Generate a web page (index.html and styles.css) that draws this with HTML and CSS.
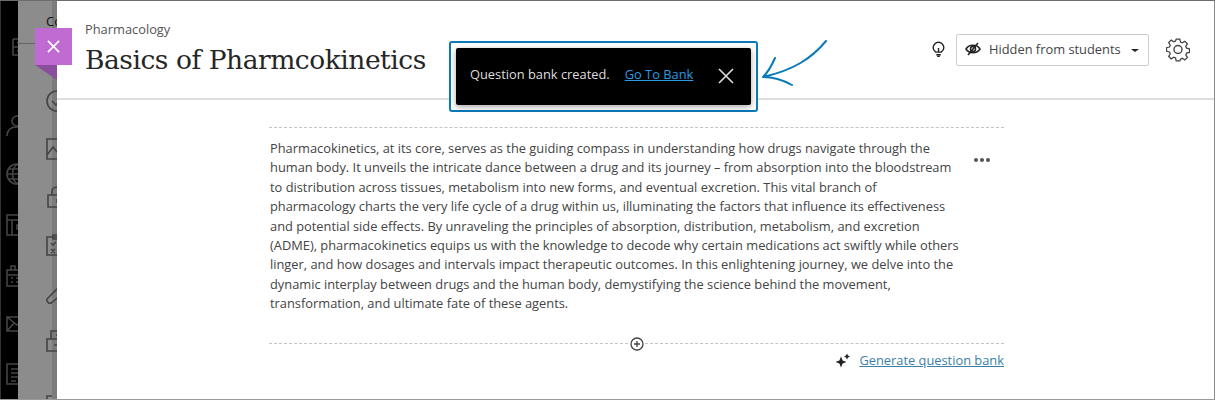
FILE: index.html
```html
<!DOCTYPE html>
<html lang="en">
<head>
  <meta charset="UTF-8">
  <title>Basics of Pharmcokinetics</title>
  <link rel="stylesheet" href="styles.css">
</head>
<body>
  <div class="page">
    <div class="rail">
      <svg class="rail-logo" viewBox="0 0 12 18"><path d="M1 1h11M1 1v16h11M1 9h11M5 5h7M5 13h7"/></svg>
      <svg class="rail-person" viewBox="0 0 22 22"><circle cx="11" cy="6" r="5"/><path d="M1 21c0-6 4-9 10-9s10 3 10 9"/></svg>
      <svg viewBox="0 0 22 22"><circle cx="11" cy="11" r="10"/><path d="M1 11h20M2 6h18M2 16h18M11 1c-6 6-6 14 0 20M11 1c6 6 6 14 0 20"/></svg>
      <svg viewBox="0 0 22 22"><path d="M1 1h20v20H1zM1 6h20M6 6v15M11 11h8v4h-8z"/></svg>
      <svg viewBox="0 0 22 22"><path d="M1 5h20v16H1zM1 10h20M5 1h4v4H5zM14 1h4v4h-4zM5 13h2M10 13h2M15 13h2M5 17h2M10 17h2M15 17h2"/></svg>
      <svg class="rail-mail" viewBox="0 0 22 16"><path d="M1 1h20v14H1zM1 1l10 8 10-8M1 15l7-8M21 15l-7-8"/></svg>
      <svg viewBox="0 0 22 22"><path d="M1 1h20v20H1zM5 6h12M5 10h12M5 14h12M5 18h5"/></svg>
    </div>
    <div class="nav">
      <div class="nav-title">Course</div>
      <svg viewBox="0 0 22 22"><circle cx="11" cy="11" r="10"/><path d="M6 11l4 4 6-7"/></svg>
      <svg viewBox="0 0 22 22"><path d="M1 1h20v20H1zM1 17l6-8 5 6 3-3 6 6"/></svg>
      <svg viewBox="0 0 22 22"><path d="M2 9h18v12H2zM6 9V5c0-5 10-5 10 0v4M11 13v4"/></svg>
      <svg viewBox="0 0 22 22"><path d="M1 3h20v18H1zM7 1h8v4H7zM5 9l2 2 3-3M5 15l4 4M9 15l-4 4M13 10h5M13 16h5"/></svg>
      <svg viewBox="0 0 22 22"><path d="M1 17L14 4c3-3 7-1 7 0l-3 3 1 2 3-2c1 4-3 7-7 6L5 21c-2 1-5-2-4-4z"/></svg>
      <svg class="nav-locker" viewBox="0 0 22 22"><path d="M1 9h20v12H1zM5 1h12v8H5zM11 4v2M8 15h6"/></svg>
      <svg viewBox="0 0 22 22"><path d="M6 1H1v6M11 1h5"/></svg>
    </div>

    <main class="panel">
      <header class="panel-head">
        <div>
          <div class="crumb">Pharmacology</div>
          <h1>Basics of Pharmcokinetics</h1>
        </div>
        <div class="head-tools">
          <svg class="bulb" viewBox="0 0 14 18"><path d="M4 12.500C2 11 1 9.500 1 7.500a6 6 0 0 1 12 0c0 2-1 3.500-3 5zM4.500 15.500h5M5.500 17.500h3M7 12V8"/></svg>
          <button class="visibility">
            <svg class="eye" viewBox="0 0 16 14"><path d="M1 7c3-5 11-5 14 0-3 5-11 5-14 0z"/><circle cx="8" cy="7" r="2.500"/><path d="M13 1L3 13"/></svg>
            <span>Hidden from students</span>
            <span class="caret"></span>
          </button>
          <svg class="gear" viewBox="0 0 24 24"><path d="M10 1h4l.7 3.200 2 .9 2.800-1.800 2.800 2.800-1.800 2.800.9 2 3.200.7v4l-3.200.7-.9 2 1.800 2.800-2.800 2.800-2.800-1.800-2 .9L14 25h-4l-.7-3.200-2-.9-2.800 1.800-2.800-2.800 1.800-2.800-.9-2L-.6 14.400v-4l3.200-.7.9-2L1.700 4.900l2.800-2.800 2.800 1.800 2-.9z" transform="translate(1.100 .2) scale(.91)"/><circle cx="12" cy="11.500" r="4"/></svg>
        </div>
      </header>

      <section class="content">
        <div class="doc-block">
          <p>Pharmacokinetics, at its core, serves as the guiding compass in understanding how drugs navigate through the human body. It unveils the intricate dance between a drug and its journey – from absorption into the bloodstream to distribution across tissues, metabolism into new forms, and eventual excretion. This vital branch of pharmacology charts the very life cycle of a drug within us, illuminating the factors that influence its effectiveness and potential side effects. By unraveling the principles of absorption, distribution, metabolism, and excretion (ADME), pharmacokinetics equips us with the knowledge to decode why certain medications act swiftly while others linger, and how dosages and intervals impact therapeutic outcomes. In this enlightening journey, we delve into the dynamic interplay between drugs and the human body, demystifying the science behind the movement, transformation, and ultimate fate of these agents.</p>
          <div class="more"><i></i><i></i><i></i></div>
        </div>
        <div class="add-row">
          <svg viewBox="0 0 14 14"><circle cx="7" cy="7" r="6"/><path d="M7 4v6M4 7h6"/></svg>
        </div>
        <div class="generate">
          <svg viewBox="0 0 14 14"><path d="M5 3.500l1.600 3.900 3.900 1.600-3.900 1.600L5 14.500l-1.600-3.900L-.5 9l3.900-1.600zM11 .5l1 2 2 1-2 1-1 2-1-2-2-1 2-1z"/></svg>
          <a href="#">Generate question bank</a>
        </div>
      </section>
    </main>
  </div>

  <div class="flag">
    <svg viewBox="0 0 14 14"><path d="M1 1l12 12M13 1L1 13"/></svg>
  </div>

  <div class="toast-ring">
    <div class="toast">
      <span>Question bank created.</span>
      <a href="#">Go To Bank</a>
      <svg viewBox="0 0 16 16"><path d="M1 1l14 14M15 1L1 15"/></svg>
    </div>
  </div>

  <svg class="arrow" viewBox="0 0 70 50"><path d="M66 3C52 20 34 32 3 39M15 20C12 27 8 34 3 39c9 0 20 3 29 8"/></svg>
</body>
</html>
```

FILE: styles.css
```css
html, body {
  margin: 0;
  height: 400px;
  overflow: hidden;
}
body {
  font-family: 'Open Sans', sans-serif;
  font-size: 12.85px;
  color: #333;
  background: #000;
}
.page {
  display: flex;
  height: 400px;
  box-sizing: border-box;
  border-top: 1px solid #6e6a70;
  border-bottom: 1px solid #9a9a9a;
}
.rail {
  width: 18px;
  flex: none;
  box-sizing: border-box;
  padding: 37px 0 0 5px;
  background: #000;
  overflow: hidden;
  border-left: 1px solid #333;
}
.rail svg, .nav svg {
  display: block;
  width: 22px;
  height: 22px;
  flex: none;
  fill: none;
  stroke: #444;
  stroke-width: 1.6;
  margin-bottom: 29px;
}
.rail .rail-logo {
  width: 12px;
  height: 18px;
  margin: 0 0 59px 6px;
}
.rail .rail-person {
  margin-bottom: 26px;
}
.rail .rail-mail {
  height: 16px;
  margin-bottom: 31px;
}
.nav {
  width: 39px;
  flex: none;
  box-sizing: border-box;
  padding: 11px 0 0 28px;
  background: linear-gradient(to right, #8c8c8c 34px, #7b7b7b 34px);
  overflow: hidden;
}
.nav-title {
  font-size: 13px;
  line-height: 18px;
  color: #111;
  margin-bottom: 60px;
  white-space: nowrap;
}
.nav svg {
  margin-bottom: 26px;
}
.nav .nav-locker {
  margin-bottom: 43px;
}
.panel {
  flex: 1;
  background: #fff;
  border-right: 1px solid #8a8a8a;
}
.panel-head {
  display: flex;
  justify-content: space-between;
  height: 99px;
  box-sizing: border-box;
  padding: 19px 24px 0 28px;
  border-bottom: 2px solid #dedede;
}
.crumb {
  line-height: 18px;
  color: #555;
}
h1 {
  margin: 3px 0 0;
  font-family: 'DejaVu Serif', serif;
  font-size: 26.5px;
  font-weight: 400;
  line-height: 38px;
  color: #262626;
  letter-spacing: -0.47px;
  white-space: nowrap;
}
.head-tools {
  display: flex;
  align-items: center;
  align-self: flex-start;
  margin-top: 14px;
}
.bulb {
  width: 13px;
  height: 16px;
  margin: 0 11px 2px 1px;
  fill: none;
  stroke: #222;
  stroke-width: 1.6;
}
.visibility {
  display: flex;
  align-items: center;
  width: 193px;
  height: 32px;
  padding: 0 8px 2px;
  box-sizing: border-box;
  background: #fff;
  border: 1px solid #cdcdcd;
  border-radius: 2px;
  font: inherit;
  color: #444;
  white-space: nowrap;
}
.eye {
  width: 16px;
  height: 14px;
  fill: none;
  stroke: #222;
  stroke-width: 1.5;
  margin-right: 8px;
}
.caret {
  margin: 2px 0 0 10px;
  border: 4px solid transparent;
  border-top: 3.5px solid #222;
  border-bottom: 0;
}
.gear {
  width: 24px;
  height: 24px;
  margin-left: 17px;
  fill: none;
  stroke: #444;
  stroke-width: 1.4;
}
.content {
  width: 735px;
  margin: 27px 0 0 212px;
}
.doc-block {
  display: flex;
  align-items: flex-start;
  border-top: 1px dashed #c4c4c4;
  padding-top: 11px;
}
.doc-block p {
  width: 692px;
  margin: 0 0 0 1px;
  line-height: 19.4px;
  color: #444;
}
.more {
  display: flex;
  gap: 2px;
  margin: 19px 0 0 12px;
}
.more i {
  width: 4px;
  height: 4px;
  border-radius: 50%;
  background: #555;
}
.add-row {
  display: flex;
  justify-content: center;
  height: 1px;
  margin-top: 29px;
  border-top: 1px dashed #c4c4c4;
}
.add-row svg {
  width: 14px;
  height: 14px;
  margin-top: -7px;
  background: #fff;
  fill: none;
  stroke: #444;
  stroke-width: 1.3;
}
.generate {
  display: flex;
  justify-content: flex-end;
  align-items: center;
  gap: 9px;
  margin-top: 6px;
}
.generate svg {
  width: 14px;
  height: 14px;
  fill: #222;
  overflow: visible;
}
.generate a {
  color: #3b7fa8;
}
.flag {
  position: absolute;
  left: 35px;
  top: 28px;
  width: 37px;
  height: 37px;
  display: flex;
  align-items: center;
  justify-content: center;
  background: #c06bd2;
}
.flag::before {
  content: "";
  position: absolute;
  left: -17px;
  top: 15px;
  width: 17px;
  height: 1px;
  background: #666;
}
.flag::after {
  content: "";
  position: absolute;
  left: 0;
  top: 37px;
  border-top: 15px solid #8a4f9c;
  border-left: 22px solid transparent;
}
.flag svg {
  width: 13px;
  height: 13px;
  fill: none;
  stroke: #fff;
  stroke-width: 1.8;
}
.toast-ring {
  position: absolute;
  left: 449px;
  top: 41px;
  width: 309px;
  height: 71px;
  box-sizing: border-box;
  padding: 5px;
  border: 2px solid #0a7ab8;
  border-radius: 3px;
  background: #fff;
}
.toast {
  display: flex;
  align-items: center;
  height: 57px;
  box-sizing: border-box;
  padding: 0 17px 5px 14px;
  background: #000;
  border-radius: 2px;
  box-shadow: 0 2px 6px rgba(0,0,0,0.35);
  color: #ddd;
}
.toast a {
  margin-left: 15px;
  color: #2a9be0;
}
.toast svg {
  width: 16px;
  height: 16px;
  margin: 3px 0 0 auto;
  fill: none;
  stroke: #ddd;
  stroke-width: 1.6;
}
.arrow {
  position: absolute;
  left: 760px;
  top: 38px;
  width: 70px;
  height: 50px;
  fill: none;
  stroke: #0a7ab8;
  stroke-width: 2;
  stroke-linecap: round;
  stroke-linejoin: round;
}
```
